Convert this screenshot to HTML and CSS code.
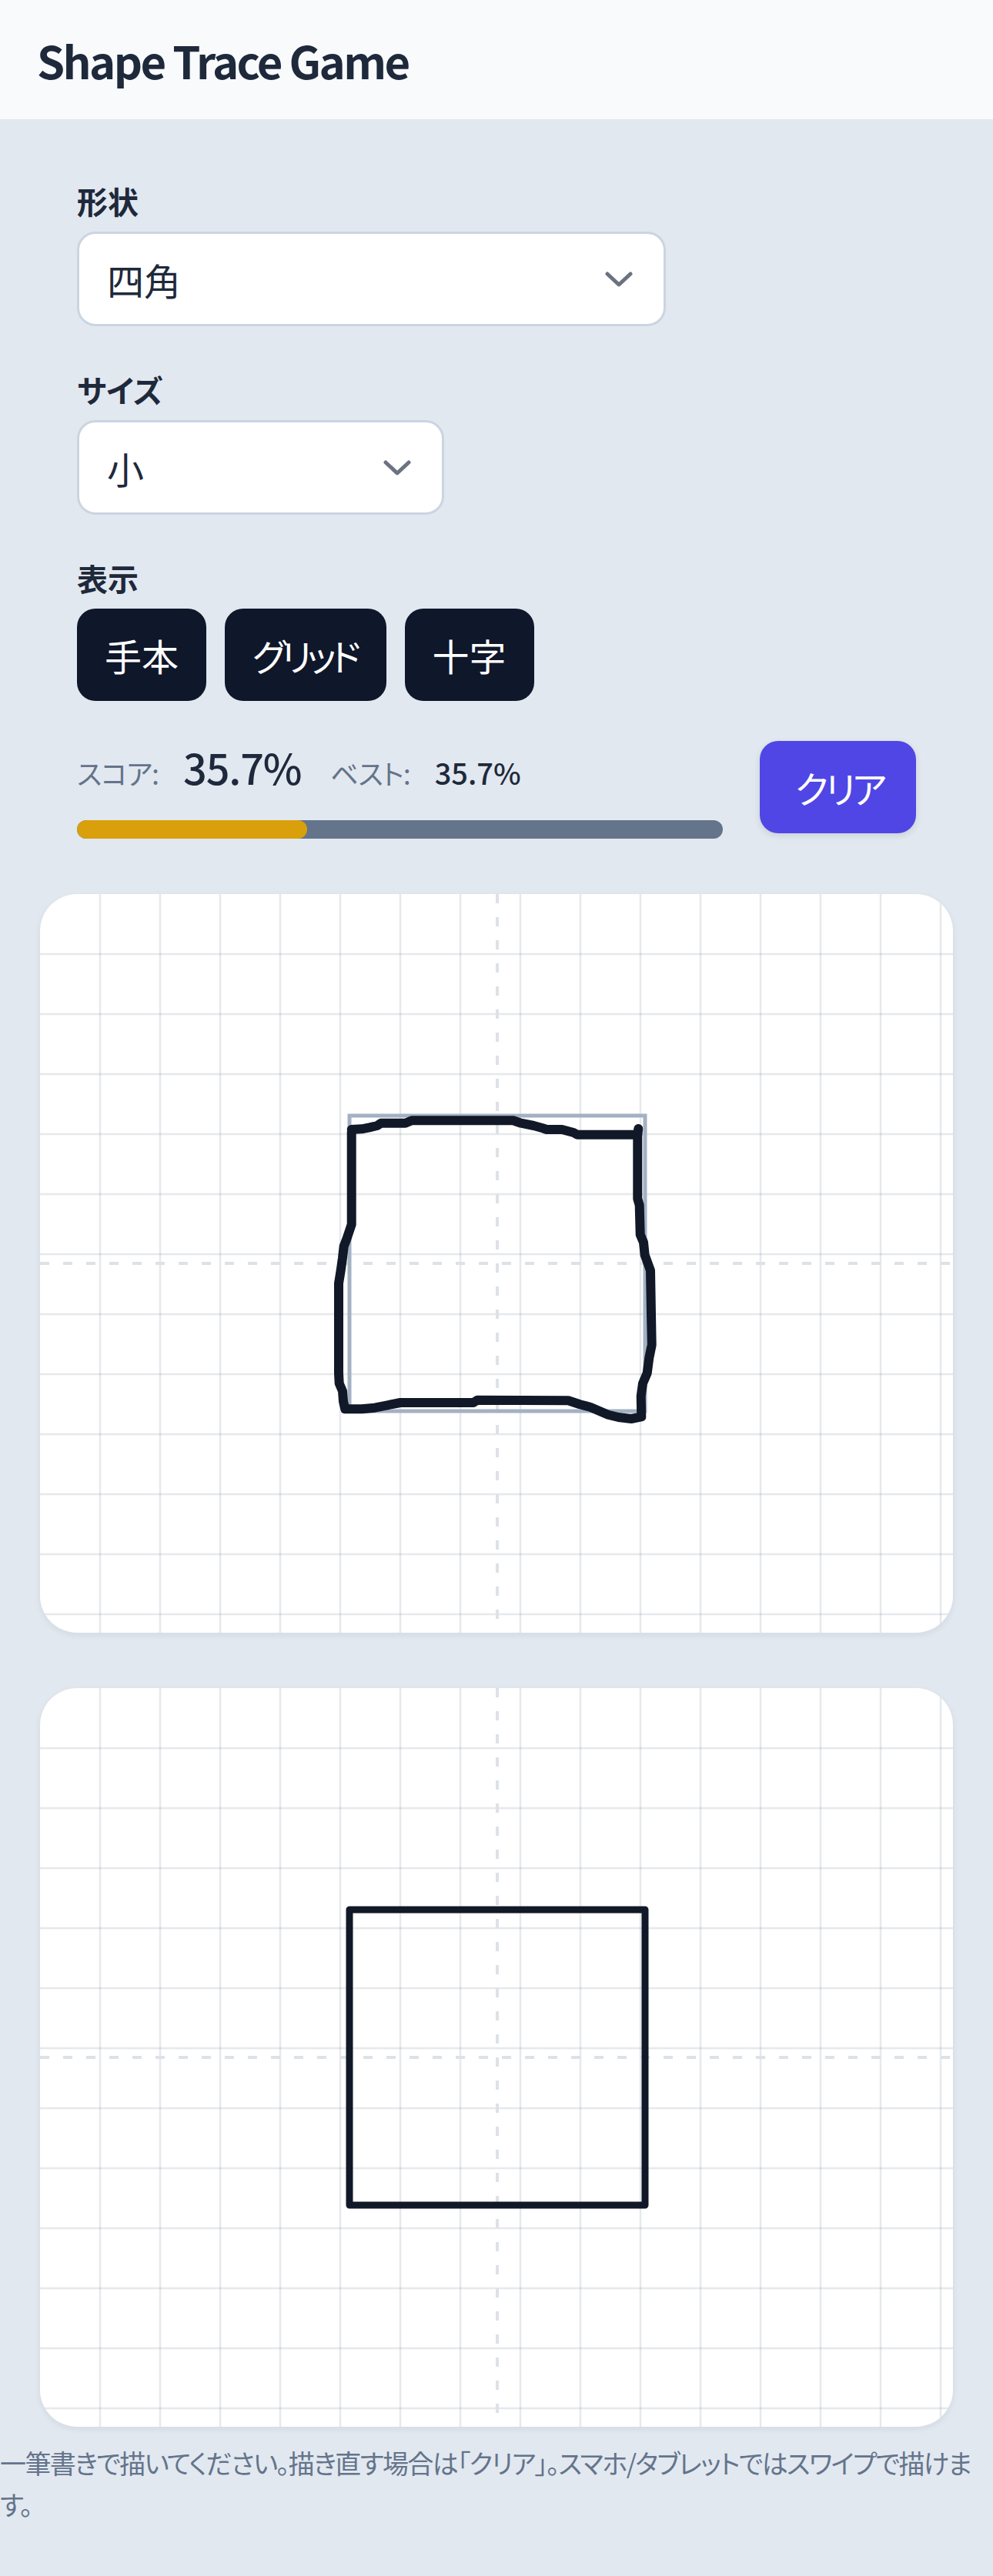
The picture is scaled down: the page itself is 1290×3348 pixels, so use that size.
FILE: index.html
```html
<!DOCTYPE html>
<html lang="ja">
<head>
<meta charset="utf-8">
<title>Shape Trace Game</title>
<link rel="stylesheet" href="styles.css">
</head>
<body>
<header class="topbar">
  <h1 class="title">Shape Trace Game</h1>
</header>
<main class="main">
  <section class="controls">
    <div class="field">
      <div class="label">形状</div>
      <div class="select select-wide">
        <span>四角</span>
        <svg class="chev" width="36" height="20" viewBox="0 0 36 20"><path d="M3 3 L18 17 L33 3" fill="none" stroke="#6b7280" stroke-width="5" stroke-linecap="round" stroke-linejoin="round"/></svg>
      </div>
    </div>
    <div class="field">
      <div class="label">サイズ</div>
      <div class="select select-narrow">
        <span>小</span>
        <svg class="chev" width="36" height="20" viewBox="0 0 36 20"><path d="M3 3 L18 17 L33 3" fill="none" stroke="#6b7280" stroke-width="5" stroke-linecap="round" stroke-linejoin="round"/></svg>
      </div>
    </div>
    <div class="field">
      <div class="label">表示</div>
      <div class="toggles">
        <button class="toggle">手本</button>
        <button class="toggle toggle-kana">グリッド</button>
        <button class="toggle">十字</button>
      </div>
    </div>
    <div class="score-row">
      <div class="score-block">
        <div class="score-line">
          <span class="score-label">スコア:</span>
          <span class="score-value">35.7%</span>
          <span class="score-label">ベスト:</span>
          <span class="best-value">35.7%</span>
        </div>
        <div class="bar"><div class="bar-fill" style="width:35.7%"></div></div>
      </div>
      <button class="clear">クリア</button>
    </div>
  </section>

  <div class="canvas-card">
    <svg class="board" width="1186" height="960" viewBox="0 0 1186 960">
      <g class="grid" stroke="rgba(100,116,139,0.16)" stroke-width="2.5">
        <line x1="78" y1="0" x2="78" y2="960"/><line x1="156" y1="0" x2="156" y2="960"/><line x1="234" y1="0" x2="234" y2="960"/><line x1="312" y1="0" x2="312" y2="960"/><line x1="390" y1="0" x2="390" y2="960"/><line x1="468" y1="0" x2="468" y2="960"/><line x1="546" y1="0" x2="546" y2="960"/><line x1="624" y1="0" x2="624" y2="960"/><line x1="702" y1="0" x2="702" y2="960"/><line x1="780" y1="0" x2="780" y2="960"/><line x1="858" y1="0" x2="858" y2="960"/><line x1="936" y1="0" x2="936" y2="960"/><line x1="1014" y1="0" x2="1014" y2="960"/><line x1="1092" y1="0" x2="1092" y2="960"/><line x1="1170" y1="0" x2="1170" y2="960"/>
        <line x1="0" y1="78" x2="1186" y2="78"/><line x1="0" y1="156" x2="1186" y2="156"/><line x1="0" y1="234" x2="1186" y2="234"/><line x1="0" y1="312" x2="1186" y2="312"/><line x1="0" y1="390" x2="1186" y2="390"/><line x1="0" y1="468" x2="1186" y2="468"/><line x1="0" y1="546" x2="1186" y2="546"/><line x1="0" y1="624" x2="1186" y2="624"/><line x1="0" y1="702" x2="1186" y2="702"/><line x1="0" y1="780" x2="1186" y2="780"/><line x1="0" y1="858" x2="1186" y2="858"/><line x1="0" y1="936" x2="1186" y2="936"/>
      </g>
      <g stroke="#dde1e8" stroke-width="4" stroke-dasharray="12 18">
        <line x1="594" y1="0" x2="594" y2="960"/>
        <line x1="0" y1="480" x2="1186" y2="480"/>
      </g>
      <rect x="402" y="288" width="384" height="384" fill="none" stroke="#a3b1c3" stroke-width="5"/>
      <polyline fill="none" stroke="#111827" stroke-width="12" stroke-linecap="round" stroke-linejoin="round"
        points="404.7,306 418,305.3 428,303.3 438,301 443,297.7 474.7,297.7 483,294.3 614.7,294.3 624.7,297.7 641.3,301 653,304.3 658,306 678,306 693,310 698,312.7 776.3,312.7 776.3,396 778.7,404.3 779.7,442.7 784,452.7 785.7,469.3 793,489.3 794.7,586 791.3,602.7 788.7,622.7 783,636 780.7,652.7 781.3,679.3 768,682 751.3,680 738,676.7 714.7,666.7 701.3,663.3 686.3,658.3 568,657.7 563,661 468,661 451.3,664.3 434.7,667.7 418,669.3 396.3,669.3 394,659.3 393,646 388.7,636 388,622.7 388,506 390.7,489.3 393,472.7 394.7,457.7 398,449.3 404.7,429.3 404.7,309.3"/>
      <path d="M777.3 305 L776.3 313" fill="none" stroke="#111827" stroke-width="12" stroke-linecap="round"/>
    </svg>
  </div>

  <div class="canvas-card">
    <svg class="board" width="1186" height="960" viewBox="0 0 1186 960">
      <g class="grid" stroke="rgba(100,116,139,0.16)" stroke-width="2.5">
        <line x1="78" y1="0" x2="78" y2="960"/><line x1="156" y1="0" x2="156" y2="960"/><line x1="234" y1="0" x2="234" y2="960"/><line x1="312" y1="0" x2="312" y2="960"/><line x1="390" y1="0" x2="390" y2="960"/><line x1="468" y1="0" x2="468" y2="960"/><line x1="546" y1="0" x2="546" y2="960"/><line x1="624" y1="0" x2="624" y2="960"/><line x1="702" y1="0" x2="702" y2="960"/><line x1="780" y1="0" x2="780" y2="960"/><line x1="858" y1="0" x2="858" y2="960"/><line x1="936" y1="0" x2="936" y2="960"/><line x1="1014" y1="0" x2="1014" y2="960"/><line x1="1092" y1="0" x2="1092" y2="960"/><line x1="1170" y1="0" x2="1170" y2="960"/>
        <line x1="0" y1="78" x2="1186" y2="78"/><line x1="0" y1="156" x2="1186" y2="156"/><line x1="0" y1="234" x2="1186" y2="234"/><line x1="0" y1="312" x2="1186" y2="312"/><line x1="0" y1="390" x2="1186" y2="390"/><line x1="0" y1="468" x2="1186" y2="468"/><line x1="0" y1="546" x2="1186" y2="546"/><line x1="0" y1="624" x2="1186" y2="624"/><line x1="0" y1="702" x2="1186" y2="702"/><line x1="0" y1="780" x2="1186" y2="780"/><line x1="0" y1="858" x2="1186" y2="858"/><line x1="0" y1="936" x2="1186" y2="936"/>
      </g>
      <g stroke="#dde1e8" stroke-width="4" stroke-dasharray="12 18">
        <line x1="594" y1="0" x2="594" y2="960"/>
        <line x1="0" y1="480" x2="1186" y2="480"/>
      </g>
      <rect x="402" y="288" width="384" height="384" fill="none" stroke="#111827" stroke-width="9" stroke-linejoin="round"/>
    </svg>
  </div>

  <p class="note">一筆書きで描いてください。描き直す場合は「クリア」。スマホ/タブレットではスワイプで描けます。</p>
</main>
</body>
</html>
```

FILE: styles.css
```css
* { box-sizing: border-box; }

html, body {
  margin: 0;
  background: #e2e8f0;
}

body {
  font-family: "Noto Sans CJK JP", "Noto Sans", sans-serif;
  font-feature-settings: "palt" 1;
  color: #1e293b;
  min-height: 3348px;
}

button {
  font-family: inherit;
  font-feature-settings: inherit;
  border: none;
  cursor: pointer;
}

.topbar {
  background: #f8fafc;
  height: 155px;
  padding: 0 48px;
  display: flex;
  align-items: center;
}

.title {
  margin: 0;
  font-size: 58px;
  font-weight: 700;
  letter-spacing: -2.6px;
  line-height: 1;
  color: #1e293b;
}

.controls {
  padding: 76px 100px 0 100px;
}

.field {
  margin-bottom: 52px;
}

.label {
  font-size: 40px;
  line-height: 60px;
  font-weight: 700;
  color: #1e293b;
  margin-bottom: 10px;
}

.select {
  height: 123px;
  background: #ffffff;
  border: 3px solid #cbd5e1;
  border-radius: 24px;
  display: flex;
  align-items: center;
  justify-content: space-between;
  padding: 0 40px 0 36px;
  font-size: 48px;
  color: #1e293b;
}

.select-wide { width: 765px; }
.select-narrow { width: 477px; }

.chev { display: block; }

.toggles {
  display: flex;
  gap: 24px;
}

.toggle {
  height: 120px;
  padding: 0 36px;
  border-radius: 24px;
  background: #0f172a;
  color: #ffffff;
  font-size: 48px;
  line-height: 1;
}

.toggle-kana {
  letter-spacing: -6px;
  padding: 0 39px 0 36px;
}

.score-row {
  margin-top: -8px;
  display: flex;
  align-items: center;
  gap: 48px;
}

.score-block {
  flex: 1;
}

.score-line {
  display: flex;
  align-items: baseline;
  height: 84px;
  line-height: 84px;
}

.score-label {
  font-size: 36px;
  color: #64748b;
  margin-right: 32px;
  letter-spacing: -1px;
}

.score-value {
  font-size: 54px;
  font-weight: 500;
  letter-spacing: -1.2px;
  color: #1e293b;
  margin-right: 38px;
}

.best-value {
  font-size: 38px;
  font-weight: 500;
  color: #1e293b;
}

.bar {
  margin-top: 27px;
  height: 24px;
  border-radius: 12px;
  background: #64748b;
  overflow: hidden;
}

.bar-fill {
  height: 100%;
  background: #d9a00b;
  border-radius: 12px;
}

.clear {
  height: 120px;
  padding: 0 42px 0 46px;
  border-radius: 24px;
  background: #4f46e5;
  color: #ffffff;
  font-size: 48px;
  letter-spacing: -4px;
  line-height: 1;
  box-shadow: 0 3px 8px rgba(15, 23, 42, 0.12);
}

.canvas-card {
  margin: 72px 52px 0 52px;
  height: 960px;
  background: #ffffff;
  border-radius: 48px;
  overflow: hidden;
  box-shadow: 0 3px 9px rgba(15, 23, 42, 0.07);
}

.board { display: block; }

.note {
  margin: 20px 0 0 0;
  font-size: 34px;
  letter-spacing: -1.6px;
  line-height: 54px;
  color: #64748b;
}
```
